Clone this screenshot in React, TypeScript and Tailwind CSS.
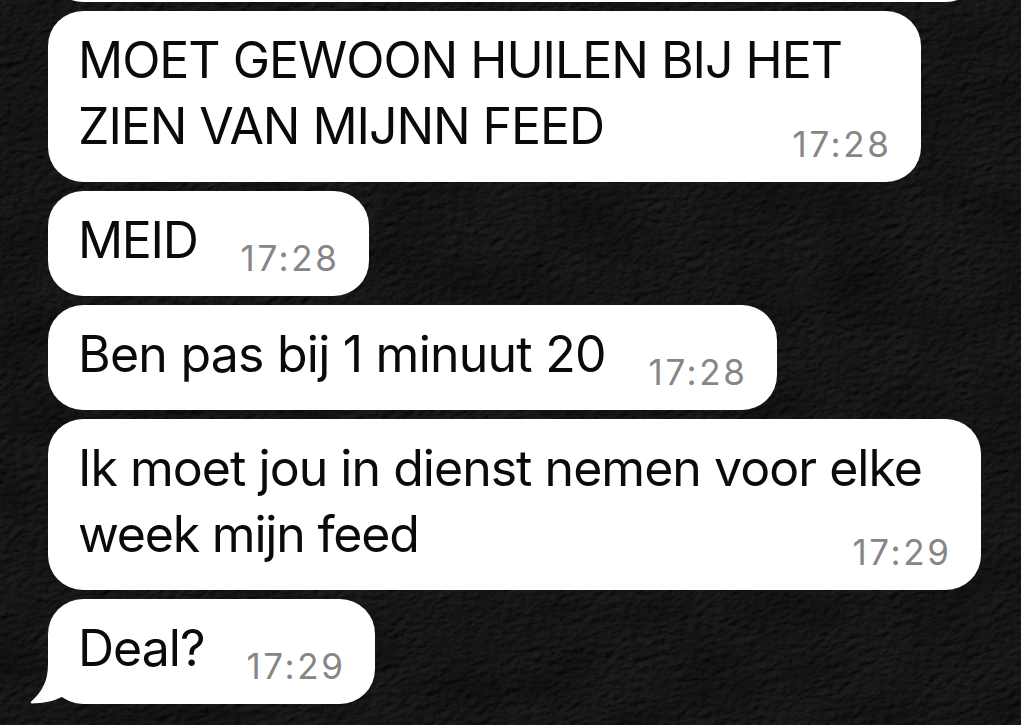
import clsx from "clsx";

interface Line {
    text: string;
    tracking: string;
}

interface Message {
    lines: Line[];
    time: string;
    width: string;
    tail?: boolean;
}

const messages: Message[] = [
    {
        lines: [
            { text: "MOET GEWOON HUILEN BIJ HET", tracking: "tracking-[-1.03px]" },
            { text: "ZIEN VAN MIJNN FEED", tracking: "tracking-[-1.06px]" },
        ],
        time: "17:28",
        width: "w-[873px]",
    },
    {
        lines: [{ text: "MEID", tracking: "tracking-[-1.3px]" }],
        time: "17:28",
        width: "w-[321px]",
    },
    {
        lines: [{ text: "Ben pas bij 1 minuut 20", tracking: "tracking-[-0.77px]" }],
        time: "17:28",
        width: "w-[729px]",
    },
    {
        lines: [
            { text: "Ik moet jou in dienst nemen voor elke", tracking: "tracking-[-0.97px]" },
            { text: "week mijn feed", tracking: "tracking-[-1.2px]" },
        ],
        time: "17:29",
        width: "w-[933px]",
    },
    {
        lines: [{ text: "Deal?", tracking: "tracking-[-1px]" }],
        time: "17:29",
        width: "w-[327px]",
        tail: true,
    },
];

// dark rough paper behind the chat
const Wallpaper = () => (
    <svg className="absolute inset-0 h-full w-full" aria-hidden="true">
        <filter id="paper" x="0" y="0" width="100%" height="100%" colorInterpolationFilters="sRGB">
            <feTurbulence type="fractalNoise" baseFrequency="0.11 0.17" numOctaves="4" seed="23" result="fine" />
            <feColorMatrix in="fine" values="0 0 0 0 0  0 0 0 0 0  0 0 0 0 0  0.6 0.5 0 0 0" />
            <feDiffuseLighting surfaceScale="2.6" diffuseConstant="0.125" lightingColor="#fff" result="relief">
                <feDistantLight azimuth="245" elevation="48" />
            </feDiffuseLighting>
            {/* slow light and dark patches across the sheet */}
            <feTurbulence type="fractalNoise" baseFrequency="0.012 0.02" numOctaves="3" seed="4" />
            <feColorMatrix values="0.6 0 0 0 0.62  0.6 0 0 0 0.62  0.6 0 0 0 0.62  0 0 0 0 1" result="patches" />
            <feBlend in="relief" in2="patches" mode="multiply" />
        </filter>
        <rect
            x="-400"
            y="-400"
            width="1900"
            height="1600"
            transform="rotate(-14 510 362)"
            filter="url(#paper)"
        />
    </svg>
);

const Tail = () => (
    <svg
        className="absolute bottom-0 -left-[18px] h-[46px] w-[46px] text-white"
        viewBox="0 0 46 46"
        fill="currentColor"
    >
        <path d="M18 0V6C18 22 13 33 1.2 43.5C0.2 44.6 0.6 45.4 2.2 45.4C13 45.4 23 43.3 32.5 38.7L46 30V0Z" />
    </svg>
);

const Bubble = ({ message }: { message: Message }) => (
    <div
        className={clsx(
            "relative flex shrink-0 items-end justify-between rounded-[35px] bg-white pt-4 pr-8 pb-[23px] pl-[30px]",
            message.width
        )}
    >
        {message.tail && <Tail />}
        <div className="relative text-[50px] leading-[66px] whitespace-nowrap text-[#0a0a0a]">
            {message.lines.map((line) => (
                <p key={line.text} className={line.tracking}>
                    {line.text}
                </p>
            ))}
        </div>
        <time className="relative -mr-[2.5px] -mb-[6px] -ml-[200px] text-[35px] leading-[42px] tracking-[2.6px] text-[#868686]">
            {message.time}
        </time>
    </div>
);

const App = () => {
    return (
        <main className="relative h-[725px] w-[1021px] overflow-hidden bg-[#171717] font-['Inter',sans-serif]">
            <Wallpaper />
            <div className="relative flex flex-col items-start gap-[9px] pl-12">
                {/* end of the previous bubble */}
                <div className="-mt-[98px] h-[100px] w-[933px] shrink-0 rounded-[35px] bg-white" />
                {messages.map((message, index) => (
                    <Bubble key={index} message={message} />
                ))}
            </div>
        </main>
    );
};

export default App;
